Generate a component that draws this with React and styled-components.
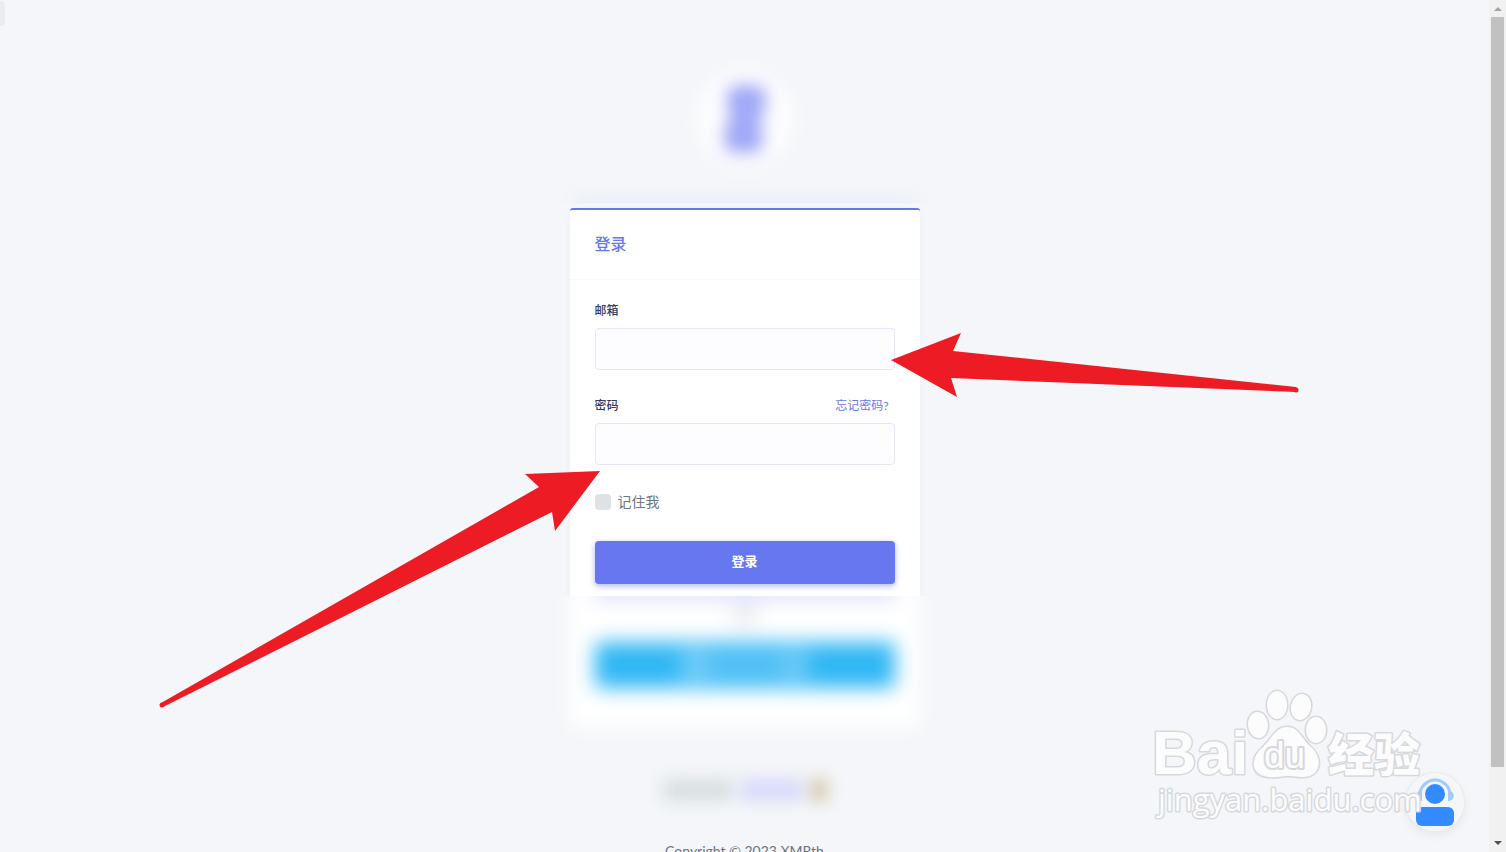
import React from 'react';
import styled, { createGlobalStyle } from 'styled-components';

const GlobalStyle = createGlobalStyle`
  * {
    box-sizing: border-box;
  }
  body {
    margin: 0;
    overflow: hidden;
    background: #f4f6f9;
    font-family: 'Lato', 'Noto Sans CJK SC', sans-serif;
    font-size: 14px;
    color: #6c757d;
  }
  h1,
  p {
    margin: 0;
  }
`;

const Window = styled.div`
  position: relative;
  display: flex;
  height: 100vh;
  overflow: hidden;
`;

const Page = styled.main`
  flex: 1;
  display: flex;
  flex-direction: column;
  align-items: center;
  overflow: hidden;
`;

const SideTab = styled.span`
  position: absolute;
  top: 1px;
  left: 0;
  width: 5px;
  height: 25px;
  border-radius: 0 4px 4px 0;
  background: #ebecef;
`;

/* 로고 */
const Brand = styled.div`
  flex: none;
  display: flex;
  justify-content: center;
  align-items: center;
  width: 100px;
  height: 100px;
  margin-top: 68px;

  & svg {
    overflow: visible;
  }
`;

const BrandShade = styled.div`
  flex: none;
  width: 390px;
  height: 35px;
  margin-bottom: 5px;
  padding: 32px 25px 0;
  overflow: hidden;

  &::after {
    content: '';
    display: block;
    height: 12px;
    background: #e6ebf8;
    filter: blur(8px);
  }
`;

/* 로그인 카드 */
const Column = styled.div`
  position: relative;
  flex: none;
  width: 350px;
`;

const Card = styled.section`
  border-top: 2px solid #6777ef;
  border-radius: 3px 3px 0 0;
  background: #fff;
  box-shadow: 0 4px 8px rgba(0, 0, 0, 0.03);
`;

const CardHeader = styled.header`
  display: flex;
  align-items: center;
  height: 70px;
  padding: 0 25px 2px;
  border-bottom: 1px solid #f9f9f9;

  & h1 {
    color: #6777ef;
    font-size: 16px;
    font-weight: 500;
    line-height: 28px;
  }
`;

const Form = styled.form`
  padding: 20px 25px 12px;
`;

const Field = styled.div`
  margin-bottom: 25px;
`;

const FieldTop = styled.div`
  display: flex;
  justify-content: space-between;
  align-items: center;
  height: 18px;
  margin-bottom: 10px;
  padding-right: 6px;
`;

const Label = styled.label`
  color: #34395e;
  font-size: 12px;
  font-weight: 500;
`;

const ForgotLink = styled.a`
  color: #6777ef;
  font-size: 12px;
  text-decoration: none;
`;

const Input = styled.input`
  display: block;
  width: 100%;
  height: 42px;
  padding: 10px 15px;
  border: 1px solid #e4e6fc;
  border-radius: 4px;
  outline: none;
  background: #fdfdff;
  font-size: 14px;
`;

const Remember = styled.div`
  display: flex;
  align-items: center;
  gap: 7px;
  height: 24px;
  margin-bottom: 27px;

  & label {
    padding-bottom: 2px;
    font-size: 14px;
  }
`;

const Checkbox = styled.input`
  appearance: none;
  width: 16px;
  height: 16px;
  margin: 0;
  border-radius: 4px;
  background: #dee2e6;

  &:checked {
    background: #6777ef;
  }
`;

const SubmitButton = styled.button`
  display: block;
  width: 100%;
  height: 43px;
  padding: 0 0 4px;
  border: 0;
  border-radius: 4px;
  background: #6777ef;
  box-shadow: 0 2px 6px #acb5f6;
  color: #fff;
  font-family: inherit;
  font-size: 13px;
  font-weight: 700;
`;

/* 흐리게 처리된 카드 하단 */
const BlurClip = styled.div`
  height: 160px;
  margin: 0 -25px;
  padding: 0 25px;
  overflow: hidden;
  background: #f4f6f9;
`;

const BlurBody = styled.div`
  height: 156px;
  margin-top: -24px;
  padding-top: 24px;
  background: #fff;
  filter: blur(10px);
`;

const BlurShade = styled.div`
  width: 300px;
  height: 8px;
  margin: -8px auto 0;
  background: #b9c0f8;
`;

const BlurDot = styled.div`
  width: 24px;
  height: 18px;
  margin: 10px auto 18px;
  background: #e6e8ea;
`;

const BlurButton = styled.div`
  display: flex;
  justify-content: center;
  align-items: center;
  width: 300px;
  height: 46px;
  margin: 0 auto;
  border-radius: 4px;
  background: #30b7f5;

  & span {
    width: 128px;
    height: 30px;
    background: linear-gradient(
      90deg,
      #74cdf7 0 28px,
      #54c1f6 28px 100px,
      #6ccaf7 100px
    );
  }
`;

const BlurLine = styled.div`
  flex: none;
  display: flex;
  justify-content: center;
  gap: 8px;
  height: 22px;
  margin-top: 23px;
  filter: blur(8px);
`;

const BlurWord = styled.span`
  width: ${({ $width }) => $width}px;
  background: ${({ $color }) => $color};
`;

const Copyright = styled.p`
  flex: none;
  margin-top: 40px;
  font-size: 14px;
  line-height: 20px;
  text-align: center;
`;

/* 화살표 */
const Arrows = styled.svg`
  position: absolute;
  top: 112px;
  left: -420px;
  width: 1160px;
  height: 400px;
  pointer-events: none;
`;

/* 우측 하단 워터마크, 상담 버튼 */
const Corner = styled.div`
  position: absolute;
  right: 31px;
  bottom: 12px;
  width: 325px;
  height: 156px;
`;

const SupportButton = styled.button`
  position: absolute;
  right: 10px;
  bottom: 8px;
  width: 60px;
  height: 60px;
  padding: 0;
  border: 1px dotted #e5dcdc;
  border-radius: 50%;
  background: #f5f6f8;
  box-shadow: 0 4px 10px rgba(0, 0, 0, 0.06);

  & svg {
    display: block;
  }
`;

const Watermark = styled.svg`
  position: absolute;
  inset: 0;
  pointer-events: none;
`;

/* 스크롤바 */
const Scrollbar = styled.div`
  flex: none;
  display: flex;
  flex-direction: column;
  align-items: center;
  width: 17px;
  background: #f1f1f1;
`;

const ScrollThumb = styled.div`
  width: 13px;
  height: 88%;
  background: #c1c1c1;
`;

const ScrollArrow = styled.svg`
  flex: none;
  width: 17px;
  height: 17px;
  margin-top: ${({ $end }) => ($end ? 'auto' : '0')};
`;

export default function App() {
  return (
    <Window>
      <GlobalStyle />
      <SideTab />
      <Page>
        <Brand>
          <svg width="100" height="100" viewBox="0 0 100 100">
            <defs>
              <filter id="soft" x="-50%" y="-50%" width="200%" height="200%">
                <feGaussianBlur stdDeviation="8" />
              </filter>
            </defs>
            <g filter="url(#soft)">
              <circle cx="50" cy="50" r="49" fill="#fdfdfe" />
              <rect x="31" y="16" width="41" height="36" rx="12" fill="#a0aaf7" />
              <rect x="28" y="50" width="41" height="36" rx="12" fill="#a0aaf7" />
            </g>
          </svg>
        </Brand>
        <BrandShade />

        <Column>
          <Card>
            <CardHeader>
              <h1>登录</h1>
            </CardHeader>
            <Form onSubmit={(e) => e.preventDefault()}>
              <Field>
                <FieldTop>
                  <Label htmlFor="email">邮箱</Label>
                </FieldTop>
                <Input id="email" type="email" />
              </Field>
              <Field>
                <FieldTop>
                  <Label htmlFor="password">密码</Label>
                  <ForgotLink href="#forgot">忘记密码?</ForgotLink>
                </FieldTop>
                <Input id="password" type="password" />
              </Field>
              <Remember>
                <Checkbox id="remember" type="checkbox" />
                <label htmlFor="remember">记住我</label>
              </Remember>
              <SubmitButton type="submit">登录</SubmitButton>
            </Form>
          </Card>
          <BlurClip>
            <BlurBody>
              <BlurShade />
              <BlurDot />
              <BlurButton>
                <span />
              </BlurButton>
            </BlurBody>
          </BlurClip>

          <Arrows viewBox="0 0 1160 400" fill="#ed1c24">
            <path d="M741 40L811 13L803 31L1146 67Q1149 70 1146 72L801 58L807 77Z" />
            <circle cx="1146" cy="70" r="2.5" />
            <path d="M450 151L375 154L389 167L11 383Q9 387 13 387L402 192L405 211Z" />
            <circle cx="12" cy="385" r="2.5" />
          </Arrows>
        </Column>

        <BlurLine>
          <BlurWord $width={70} $color="#d8dfe1" />
          <BlurWord $width={62} $color="#d7dafa" />
          <BlurWord $width={16} $color="#d3c6a8" />
        </BlurLine>
        <Copyright>Copyright © 2023 XMRth</Copyright>
      </Page>

      <Scrollbar>
        <ScrollArrow viewBox="0 0 17 17">
          <path d="M5 11L9 7L13 11Z" fill="#a3a3a3" />
        </ScrollArrow>
        <ScrollThumb />
        <ScrollArrow viewBox="0 0 17 17" $end>
          <path d="M5 6H13L9 10Z" fill="#505050" />
        </ScrollArrow>
      </Scrollbar>

      <Corner>
        <SupportButton type="button" aria-label="客服">
          <svg width="58" height="58" viewBox="0 0 58 58">
            <path
              d="M14 22A15 15 0 0 1 44 22"
              fill="none"
              stroke="#a0cbfb"
              strokeWidth="3"
            />
            <path
              d="M42 18H45Q48 20 48 23Q47 28 42 28ZM16 18H13Q10 20 10 23Q11 28 16 28Z"
              fill="#a0cbfb"
            />
            <circle cx="29" cy="21" r="12" fill="#f5f6f8" />
            <circle cx="29" cy="21" r="10" fill="#338bff" />
            <rect x="10" y="34" width="38" height="19" rx="6" fill="#338bff" />
          </svg>
        </SupportButton>
        <Watermark
          width="325"
          height="156"
          viewBox="0 0 325 156"
          fill="#fcfcfd"
          stroke="#d6d8db"
          strokeWidth="3"
          strokeLinejoin="round"
          paintOrder="stroke"
          fontFamily="'Liberation Sans', 'Noto Sans CJK SC', sans-serif"
        >
          <ellipse cx="108" cy="41" rx="10" ry="13" transform="rotate(-6 108 41)" />
          <ellipse cx="127" cy="21" rx="10" ry="14" />
          <ellipse cx="151" cy="23" rx="10" ry="13" transform="rotate(12 151 23)" />
          <ellipse cx="166" cy="46" rx="10" ry="13" />
          <path d="M137 43C149 43 151 54 160 62C174 74 171 93 153 93C146 93 143 92 137 92C130 92 127 94 119 93C101 92 99 75 113 63C122 55 125 43 137 43Z" />
          <text x="2" y="90" fontSize="62" fontWeight="700">
            Bai
          </text>
          <text x="114" y="84" fontSize="37" strokeWidth="4">
            du
          </text>
          <text x="178" y="87" fontSize="46" fontWeight="900">
            经验
          </text>
          <text x="8" y="127" fontSize="31" fontFamily="'Open Sans', sans-serif">
            jingyan.baidu.com
          </text>
        </Watermark>
      </Corner>
    </Window>
  );
}
